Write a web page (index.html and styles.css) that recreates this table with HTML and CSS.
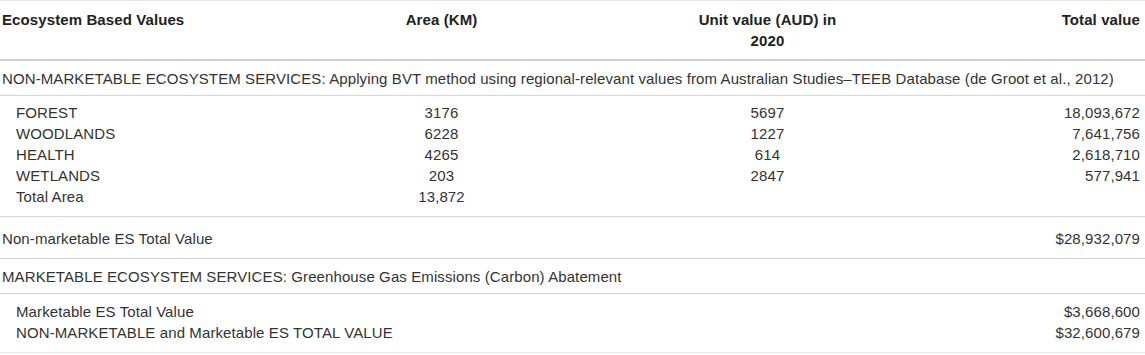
FILE: index.html
```html
<!DOCTYPE html>
<html>
<head>
<meta charset="utf-8">
<link rel="stylesheet" href="styles.css">
</head>
<body>
<table class="tbl">
  <colgroup>
    <col class="c1"><col class="c2"><col class="c3"><col class="c4">
  </colgroup>
  <thead>
    <tr class="head">
      <th class="left">Ecosystem Based Values</th>
      <th class="center">Area (KM)</th>
      <th class="center">Unit value (AUD) in 2020</th>
      <th class="right">Total value</th>
    </tr>
  </thead>
  <tbody>
    <tr class="section">
      <td colspan="4">NON-MARKETABLE ECOSYSTEM SERVICES: Applying BVT method using regional-relevant values from Australian Studies–TEEB Database (de Groot et al., 2012)</td>
    </tr>
    <tr class="row first">
      <td class="indent">FOREST</td><td class="center">3176</td><td class="center">5697</td><td class="right">18,093,672</td>
    </tr>
    <tr class="row">
      <td class="indent">WOODLANDS</td><td class="center">6228</td><td class="center">1227</td><td class="right">7,641,756</td>
    </tr>
    <tr class="row">
      <td class="indent">HEALTH</td><td class="center">4265</td><td class="center">614</td><td class="right">2,618,710</td>
    </tr>
    <tr class="row">
      <td class="indent">WETLANDS</td><td class="center">203</td><td class="center">2847</td><td class="right">577,941</td>
    </tr>
    <tr class="row last">
      <td class="indent">Total Area</td><td class="center">13,872</td><td></td><td></td>
    </tr>
    <tr class="total">
      <td>Non-marketable ES Total Value</td><td></td><td></td><td class="right">$28,932,079</td>
    </tr>
    <tr class="section">
      <td colspan="4">MARKETABLE ECOSYSTEM SERVICES: Greenhouse Gas Emissions (Carbon) Abatement</td>
    </tr>
    <tr class="row first2">
      <td class="indent">Marketable ES Total Value</td><td></td><td></td><td class="right">$3,668,600</td>
    </tr>
    <tr class="row final">
      <td class="indent">NON-MARKETABLE and Marketable ES TOTAL VALUE</td><td></td><td></td><td class="right">$32,600,679</td>
    </tr>
  </tbody>
</table>
</body>
</html>
```

FILE: styles.css
```css
html, body {
  margin: 0;
  padding: 0;
  background: #ffffff;
}

.tbl {
  width: 1145px;
  border-collapse: collapse;
  table-layout: fixed;
  font-family: "Liberation Sans", Arial, sans-serif;
  font-size: 15px;
  letter-spacing: 0.1px;
  color: #333333;
  border-top: 1px solid #e6e6e6;
}

.c1 { width: 192px; }
.c2 { width: 502px; }
.c3 { width: 150px; }
.c4 { width: 301px; }

.tbl th,
.tbl td {
  padding: 0 5px 0 2px;
  line-height: 21px;
  vertical-align: top;
  white-space: nowrap;
}

.tbl th {
  font-weight: bold;
  color: #222222;
}

.tbl th.center {
  white-space: normal;
}

.head th {
  padding-top: 8px;
  padding-bottom: 8px;
  border-bottom: 2px solid #cfcfcf;
}

.left { text-align: left; }
.center { text-align: center; }
.right { text-align: right; }

.indent { padding-left: 16px !important; }

.section td {
  padding-top: 7px;
  padding-bottom: 6px;
  border-bottom: 1px solid #d4d4d4;
}

.row.first td { padding-top: 6px; }
.row.first2 td { padding-top: 7px; }
.row.last td {
  padding-bottom: 9px;
  border-bottom: 1px solid #d4d4d4;
}

.total td {
  padding-top: 11px;
  padding-bottom: 9px;
  border-bottom: 1px solid #d4d4d4;
}

.row.final td {
  padding-bottom: 9px;
  border-bottom: 1px solid #e8e8e8;
}
```
